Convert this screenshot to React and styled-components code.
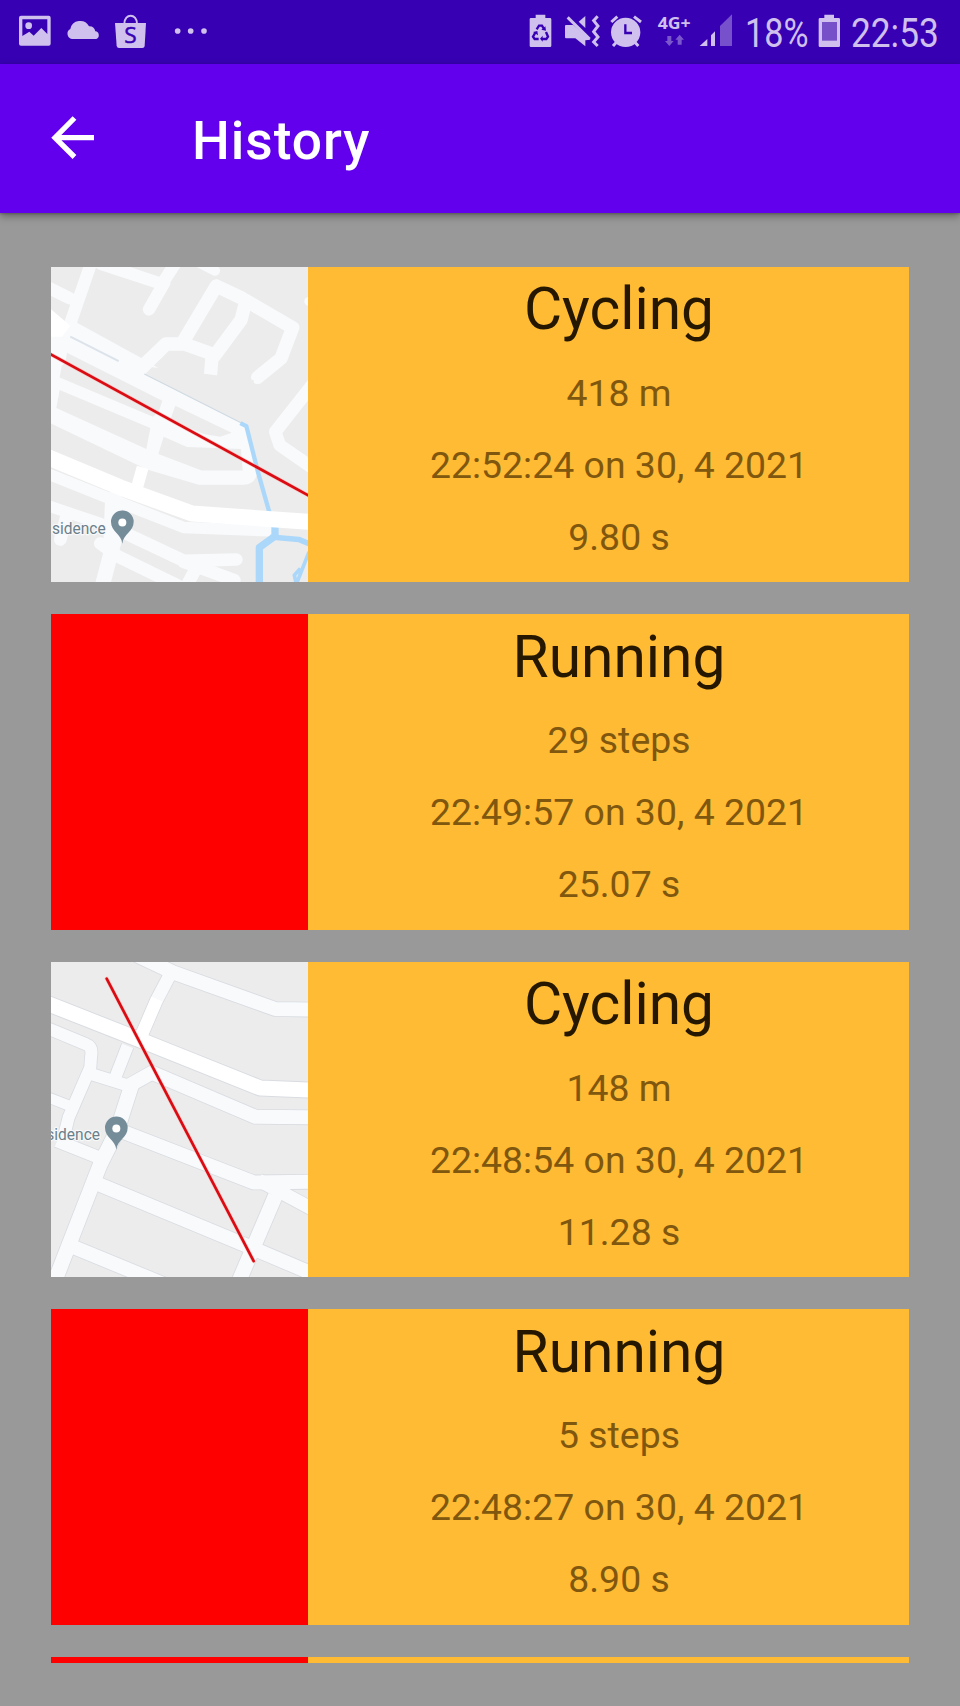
import React from "react";
import styled, { createGlobalStyle } from "styled-components";

const GlobalStyle = createGlobalStyle`
  * { box-sizing: border-box; }
  body { margin: 0; background: #999999; font-family: Roboto, "Liberation Sans", sans-serif; }
`;

const Screen = styled.div`
  width: 960px;
  height: 1706px;
  overflow: hidden;
  background: #999999;
  display: flex;
  flex-direction: column;
`;

const StatusBar = styled.div`
  height: 64px;
  flex: none;
  display: flex;
  align-items: center;
  justify-content: space-between;
  padding: 0 23px 0 18px;
  background: #3700b3;
  color: #cfc0ee;
`;

const StatusGroup = styled.div`
  display: flex;
  align-items: center;
  gap: ${(p) => p.$gap}px;
  padding-left: ${(p) => p.$lead || 0}px;
`;

const Glyph = styled.svg`
  display: block;
  flex: none;
  fill: currentColor;
`;

const StatusText = styled.div`
  width: ${(p) => p.$width}px;
  padding: 1px 0 0 ${(p) => p.$lead || 0}px;
  font-size: 40.5px;
  line-height: 64px;
  white-space: nowrap;
  span {
    display: inline-block;
    transform: scaleX(${(p) => p.$squeeze});
    transform-origin: 0 50%;
  }
`;

const AppBar = styled.header`
  height: 149.33px;
  flex: none;
  display: flex;
  align-items: center;
  padding-left: 51px;
  background: #6200ee;
  color: #fff;
  box-shadow: 0 3px 8px rgba(0, 0, 0, 0.36), 0 1px 2px rgba(0, 0, 0, 0.2);
`;

const BackIcon = styled.svg`
  width: 44px;
  height: 44px;
  flex: none;
  margin-bottom: 1px;
`;

const Title = styled.h1`
  margin: 4px 0 0 97px;
  font-size: 53.33px;
  font-weight: 500;
  line-height: 64px;
  letter-spacing: 0.95px;
`;

const List = styled.main`
  height: 1450px;
  flex: none;
  overflow: hidden;
  display: flex;
  flex-direction: column;
  gap: 32px;
  padding: 53.2px 50.67px 0;
`;

const Card = styled.article`
  height: 315.5px;
  flex: none;
  display: flex;
  background: #ffbb33;
`;

const Thumb = styled.div`
  width: 257px;
  flex: none;
  background: ${(p) => (p.$map ? "#ececec" : "#ff0000")};
  svg { display: block; width: 100%; height: 100%; }
`;

const Details = styled.div`
  flex: 1;
  padding: 7.6px 0 0 21px;
  text-align: center;
`;

const Activity = styled.h2`
  margin: 0 0 12.5px;
  font-size: 58.67px;
  font-weight: 400;
  line-height: 70px;
  color: #261800;
`;

const Meta = styled.p`
  margin: 0;
  font-size: 37.33px;
  line-height: 72px;
  letter-spacing: 0.05px;
  color: #80570e;
`;

const StatusGlyph = ({ x, w, children }) => (
  <Glyph width={w / 3} height="64" viewBox={`${x} 0 ${w} 192`}>{children}</Glyph>
);

const PictureIcon = () => (
  <StatusGlyph x={54} w={99}>
    <path fillRule="evenodd" d="M63 47H146Q152 47 152 53V131Q152 137 146 137H63Q57 137 57 131V53Q57 47 63 47ZM67 58V108L88 95L101 107L124 84L142 102V58Z" />
    <circle cx="86" cy="77" r="10" />
  </StatusGlyph>
);

const CloudIcon = () => (
  <StatusGlyph x={195} w={105}>
    <path d="M213 117A16 16 0 0 1 208 87A30 30 0 0 1 264 79Q279 78 283 94A12 12 0 0 1 286 117Z" />
  </StatusGlyph>
);

const BagIcon = () => (
  <StatusGlyph x={345} w={96}>
    <path d="M345 69H438L434 138Q433 144 427 144H357Q351 144 350 138Z" />
    <path d="M373 71C374 39 410 39 411 71" fill="none" stroke="currentColor" strokeWidth="6" />
    <text x="391.5" y="130" textAnchor="middle" fontSize="68" fontFamily="Open Sans, sans-serif" fill="#3700b3" stroke="#3700b3" strokeWidth="1.5">S</text>
  </StatusGlyph>
);

const MoreIcon = () => (
  <StatusGlyph x={525} w={102}>
    <circle cx="536" cy="93" r="8.5" />
    <circle cx="575" cy="93" r="8.5" />
    <circle cx="615" cy="93" r="8.5" />
  </StatusGlyph>
);

const BatterySaverIcon = () => (
  <StatusGlyph x={57} w={69}>
    <path d="M77 44H106V54H120Q124 54 124 58V137Q124 141 120 141H63Q59 141 59 137V58Q59 54 63 54H77Z" />
    <g fill="none" stroke="#3700b3" strokeWidth="7">
      <path d="M80 88L87 77H96L102 87" />
      <path d="M108 96L114 110L109 117H96" />
      <path d="M86 117H74L69 110L76 98" />
    </g>
    <path fill="#3700b3" d="M94 89L108 92L106 79ZM98 107V125L90 116ZM69 96L82 93L84 106Z" />
  </StatusGlyph>
);

const MuteVibrateIcon = () => (
  <StatusGlyph x={162} w={108}>
    <path d="M168 75H190L241 119L226 121V139L196 115H168Q165 115 165 112V78Q165 75 168 75Z" />
    <path d="M226 48V84L206 65Z" />
    <path d="M173 52L239 117" stroke="currentColor" strokeWidth="9" />
    <path d="M263 49L251 62L264 78L251 95L264 111L251 126L263 138" fill="none" stroke="currentColor" strokeWidth="9" />
  </StatusGlyph>
);

const AlarmIcon = () => (
  <StatusGlyph x={300} w={99}>
    <circle cx="347" cy="97" r="44" />
    <path d="M304 66L322 50M372 50L393 66M320 126L309 138M374 126L385 138" fill="none" stroke="currentColor" strokeWidth="9" />
    <path d="M346 73V99H366" fill="none" stroke="#3700b3" strokeWidth="7" />
  </StatusGlyph>
);

const NetworkIcon = () => (
  <StatusGlyph x={441} w={105}>
    <text x="443" y="87" fontSize="49" fontWeight="700" fontFamily="Open Sans, sans-serif" textLength="99" lengthAdjust="spacingAndGlyphs">4G+</text>
    <path opacity="0.45" d="M472 108H484V123H491L478 138L465 123H472ZM503 134V119H496L509 104L522 119H515V134Z" />
  </StatusGlyph>
);

const SignalIcon = () => (
  <StatusGlyph x={567} w={102}>
    <path d="M569 138L592 117V138ZM603 106L615 94V138H603Z" />
    <path opacity="0.42" d="M630 78L666 43V138H630Z" />
  </StatusGlyph>
);

const BatteryIcon = () => (
  <StatusGlyph x={294} w={69}>
    <path d="M313 44H342V54H356Q360 54 360 58V137Q360 141 356 141H300Q296 141 296 137V58Q296 54 300 54H313Z" />
    <path fill="#7650c8" d="M306 66H351V122H306Z" />
  </StatusGlyph>
);

const Pin = ({ x, y }) => (
  <g transform={`translate(${x} ${y})`}>
    <path fill="#758c99" d="M0 66C-3 36-34 30-34 0A34 34 0 0 1 34 0C34 30 3 36 0 66Z" />
    <circle cx="0" cy="2" r="12" fill="#fff" />
  </g>
);

const PlaceLabel = ({ x, y }) => (
  <text x={x} y={y} textLength="161" lengthAdjust="spacingAndGlyphs" fontSize="49" fill="#6b7f8a" stroke="#f8f9fa" strokeWidth="7" paintOrder="stroke">
    sidence
  </text>
);

const CanalMap = () => (
  <svg viewBox="32 31 771 946" preserveAspectRatio="none" fill="none">
    <path fill="#ececec" d="M32 31H803V977H32Z" />
    <g stroke="#f8fafc" strokeLinecap="round" strokeLinejoin="round">
      <path strokeWidth="37" d="M152 20L85 215M22 92L88 125M182 22L365 82L405 20M372 78L326 158" />
      <path strokeWidth="30" d="M480 20L524 42" />
      <path strokeWidth="40" d="M528 88L430 252M528 88L600 122L757 213L722 305L652 362M616 135L602 190L522 298M300 335L376 262H432L516 292L510 360" />
      <path strokeWidth="38" d="M815 385L705 525L718 565L815 632" />
    </g>
    <path fill="#f8fafc" d="M32 240L95 190L325 316L612 498L655 630Q650 683 610 684H475L320 638L32 500Z" />
    <path fill="#ececec" d="M312 352L612 505L655 560L640 370L325 330Z" />
    <path stroke="#f8fafc" strokeWidth="40" d="M300 338L378 262" />
    <path fill="#ececec" d="M80 288L366 432L355 465L338 480L58 362L64 328L75 318ZM58 400L330 514L318 577L48 454ZM405 447L574 528L540 540L490 532L390 488ZM370 540L440 571L602 577L607 641H484L354 592Z" />
    <path stroke="#dde3ea" strokeWidth="6" d="M90 240L235 313" />
    <path stroke="#d0dae2" strokeWidth="3" d="M312 352L602 498" />
    <g stroke="#f8fafc" strokeLinecap="round" strokeLinejoin="round">
      <path strokeWidth="34" d="M20 650L190 718L430 812L685 822M20 746L180 800" />
      <path strokeWidth="52" d="M220 730L215 860" />
      <path strokeWidth="45" d="M222 850L185 990" />
      <path strokeWidth="38" d="M235 820L430 912L588 908M180 860L235 900L410 985M430 915L582 970M470 930L440 985M77 785L60 848" />
    </g>
    <g stroke="#abd8fa" strokeLinejoin="round">
      <path strokeWidth="13" d="M600 499L618 508L654 650L688 770" />
      <path strokeWidth="22" d="M657 985V872L704 838V810" />
      <path strokeWidth="17" d="M690 842H708L775 848L810 862" />
      <path strokeWidth="11" d="M806 885L768 982M780 935L762 955L768 982" />
    </g>
    <g stroke="#fff">
      <path strokeWidth="48" strokeLinejoin="round" d="M15 598L240 692L455 770L815 796" />
      <path strokeWidth="36" d="M307 632L285 710" />
    </g>
    <path fill="#fff" d="M32 158L90 207L65 240H32Z" />
    <circle cx="805" cy="134" r="13" fill="#f8fafc" />
    <PlaceLabel x={35} y={831} />
    <Pin x={246} y={795} />
    <path stroke="#ffb3ad" strokeWidth="12" opacity="0.6" d="M28 291L808 718" />
    <path stroke="#da0b12" strokeWidth="8" d="M28 291L808 718" />
  </svg>
);

const minorRoads = [
  [42, "M290 14L398 65L705 175L815 177"],
  [38, "M398 55L348 150L300 262"],
  [36, "M20 232L138 281Q158 288 152 320L150 350L85 500L70 560"],
  [36, "M152 370L275 408M262 285L223 385"],
  [42, "M260 408L335 366L645 498L815 500"],
  [44, "M275 400L230 540L180 640L40 1000"],
  [30, "M15 437L95 468"],
  [38, "M50 570L180 622"],
  [42, "M240 540L640 695L815 693"],
  [40, "M655 688L815 774"],
  [44, "M705 735L592 1000"],
  [42, "M170 698L620 885L820 970"],
  [42, "M90 885L370 1000"],
];

const StreetMap = () => (
  <svg viewBox="32 34 771 946" preserveAspectRatio="none" fill="none" strokeLinejoin="round">
    <path fill="#ececec" d="M32 34H803V980H32Z" />
    <g stroke="#d9dce1">
      {minorRoads.map(([w, d]) => <path key={d} strokeWidth={w + 5} d={d} />)}
      <path strokeWidth="51" d="M15 156L300 268L660 412L815 418" />
    </g>
    <g stroke="#f8fafc">
      {minorRoads.map(([w, d]) => <path key={d} strokeWidth={w} d={d} />)}
    </g>
    <path stroke="#fff" strokeWidth="45" d="M15 156L300 268L660 412L815 418" />
    <path stroke="#fff" strokeWidth="36" d="M350 145L300 262" />
    <PlaceLabel x={18} y={567} />
    <Pin x={228} y={531} />
    <g strokeLinecap="round">
      <path stroke="#ffb3ad" strokeWidth="12" opacity="0.6" d="M199 84L640 931" />
      <path stroke="#da0b12" strokeWidth="8" d="M199 84L640 931" />
    </g>
  </svg>
);

const entries = [
  { activity: "Cycling", amount: "418 m", date: "22:52:24 on 30, 4 2021", time: "9.80 s", Map: CanalMap },
  { activity: "Running", amount: "29 steps", date: "22:49:57 on 30, 4 2021", time: "25.07 s" },
  { activity: "Cycling", amount: "148 m", date: "22:48:54 on 30, 4 2021", time: "11.28 s", Map: StreetMap },
  { activity: "Running", amount: "5 steps", date: "22:48:27 on 30, 4 2021", time: "8.90 s" },
];

export default function App() {
  return (
    <Screen>
      <GlobalStyle />
      <StatusBar>
        <StatusGroup $gap={14.5}>
          <PictureIcon />
          <CloudIcon />
          <BagIcon />
          <StatusGroup $gap={0} $lead={12.5}>
            <MoreIcon />
          </StatusGroup>
        </StatusGroup>
        <StatusGroup $gap={10}>
          <StatusGroup $gap={12}>
            <BatterySaverIcon />
            <MuteVibrateIcon />
          </StatusGroup>
          <AlarmIcon />
          <StatusGroup $gap={7} $lead={4}>
            <NetworkIcon />
            <SignalIcon />
          </StatusGroup>
          <StatusText $width={65} $lead={1.5} $squeeze={0.845}><span>18%</span></StatusText>
          <BatteryIcon />
          <StatusText $width={86} $squeeze={0.87}><span>22:53</span></StatusText>
        </StatusGroup>
      </StatusBar>
      <AppBar>
        <BackIcon viewBox="0 0 44 44" fill="none" stroke="#fff" strokeWidth="5.3">
          <path d="M23.5 2L4 21.7L23.5 41M4 21.7H43" />
        </BackIcon>
        <Title>History</Title>
      </AppBar>
      <List>
        {entries.map(({ activity, amount, date, time, Map }) => (
          <Card key={date}>
            <Thumb $map={Boolean(Map)}>{Map && <Map />}</Thumb>
            <Details>
              <Activity>{activity}</Activity>
              <Meta>{amount}</Meta>
              <Meta>{date}</Meta>
              <Meta>{time}</Meta>
            </Details>
          </Card>
        ))}
        <Card>
          <Thumb />
        </Card>
      </List>
    </Screen>
  );
}
